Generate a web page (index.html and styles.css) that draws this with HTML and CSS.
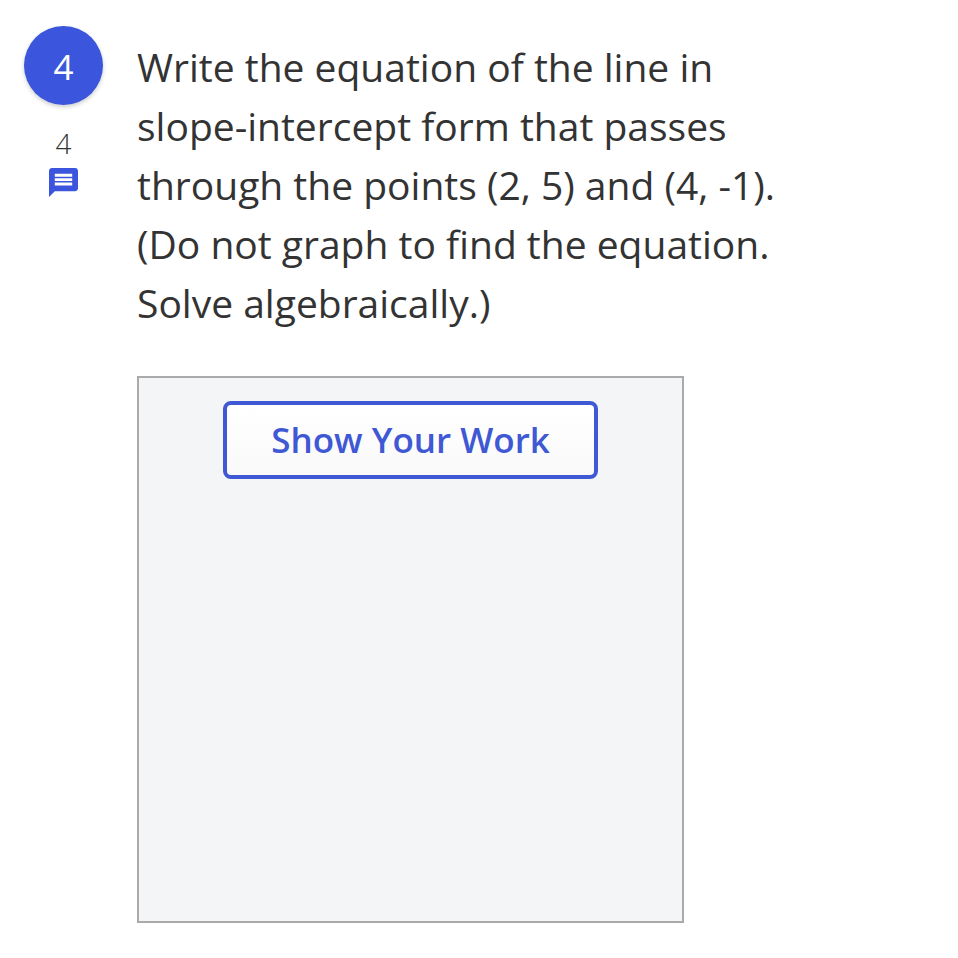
FILE: index.html
```
<!DOCTYPE html>
<html lang="en">
<head>
  <meta charset="UTF-8" />
  <meta name="viewport" content="width=device-width, initial-scale=1.0" />
  <title>Question 4</title>
  <link rel="stylesheet" href="styles.css">
</head>
<body>

  <main class="question">
    <div class="question-side">
      <div class="question-number">4</div>
      <div class="question-points">4</div>
      <button type="button" class="comment-button" aria-label="Comments">
        <svg class="comment-icon" viewBox="2 2 20 20" aria-hidden="true">
          <path d="M20 2H4c-1.100 0-1.990.9-1.990 2L2 22l4-4h14c1.100 0 2-.9 2-2V4c0-1.100-.9-2-2-2zm-2 12H6v-2h12v2zm0-3H6V9h12v2zm0-3H6V6h12v2z" />
        </svg>
      </button>
    </div>

    <div class="question-body">
      <p class="question-text">Write the equation of the line in slope-intercept form that passes through the points (2, 5) and (4, -1). (Do not graph to find the equation. Solve algebraically.)</p>

      <div class="work-area">
        <button type="button" class="work-button">Show Your Work</button>
      </div>
    </div>
  </main>

</body>
</html>
```

FILE: styles.css
```
* {
  box-sizing: border-box;
  margin: 0;
  padding: 0;
}
body {
  font-family: "Open Sans", "Noto Sans", sans-serif;
  background-color: #fff;
  color: #333;
}
.question {
  display: flex;
  align-items: flex-start;
  gap: 34px;
  padding: 26px 24px;
}
.question-side {
  display: flex;
  flex-direction: column;
  align-items: center;
  flex-shrink: 0;
}
.question-number {
  width: 79px;
  height: 79px;
  border-radius: 50%;
  background-color: #3b56dc;
  color: #fff;
  font-size: 35px;
  line-height: 82px;
  text-align: center;
  box-shadow: 0 2px 4px rgba(0, 0, 0, 0.2);
}
.question-points {
  margin-top: 20px;
  font-size: 28px;
  font-weight: 300;
  line-height: 36px;
}
.comment-button {
  margin-top: 7px;
  border: none;
  background: none;
  cursor: pointer;
}
.comment-icon {
  display: block;
  width: 29px;
  height: 29px;
  fill: #3b56dc;
}
.question-body {
  flex: 1;
  padding-top: 11px;
}
.question-text {
  max-width: 660px;
  font-size: 39px;
  line-height: 59px;
}
.work-area {
  display: flex;
  align-items: flex-start;
  justify-content: center;
  max-width: 547px;
  aspect-ratio: 1;
  margin-top: 44px;
  padding-top: 23px;
  background-color: #f3f5f7;
  border: 2px solid #aaa;
}
.work-button {
  padding: 12px 44px;
  border: 4px solid #3f58d4;
  border-radius: 8px;
  background: linear-gradient(#fff, #f9f9f9);
  color: #3f58d4;
  font-family: inherit;
  font-size: 35px;
  font-weight: 600;
  line-height: 46px;
  cursor: pointer;
}
```
